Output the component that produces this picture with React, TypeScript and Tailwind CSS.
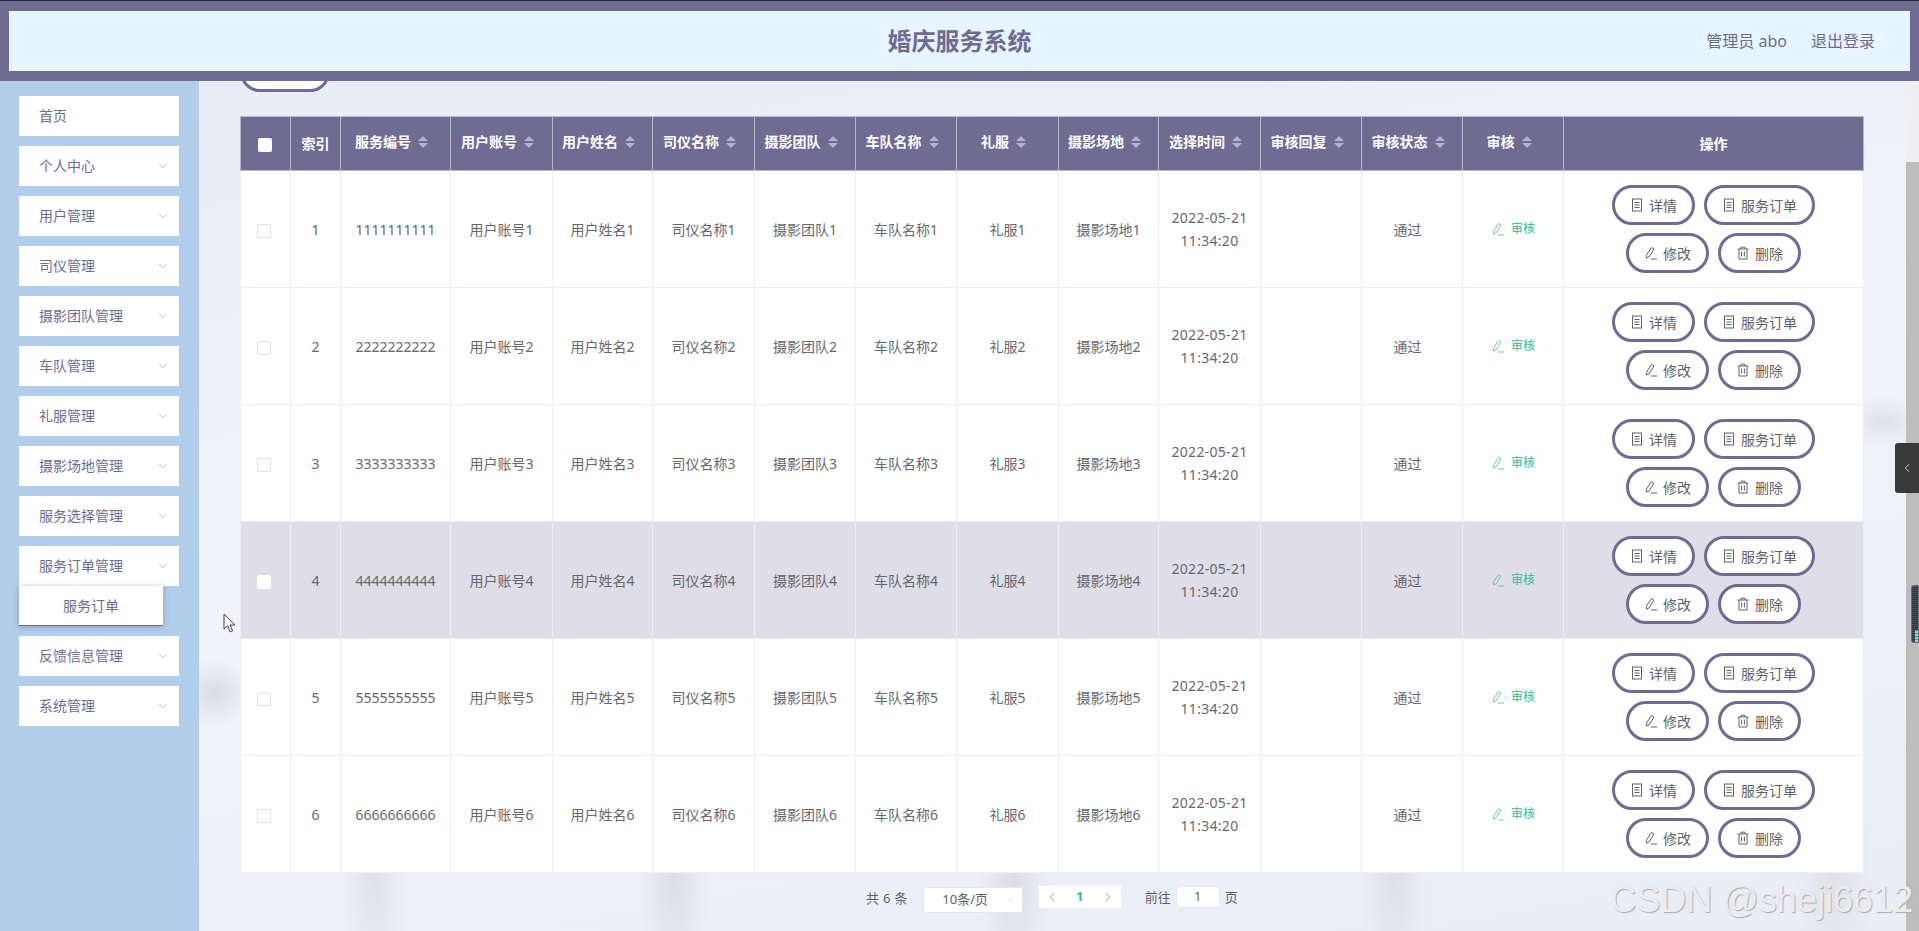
import { ChevronDown, ChevronLeft, ChevronRight } from "lucide-react"

const menus = ["首页", "个人中心", "用户管理", "司仪管理", "摄影团队管理", "车队管理", "礼服管理", "摄影场地管理", "服务选择管理", "服务订单管理", "反馈信息管理", "系统管理"]
const columns = ["服务编号", "用户账号", "用户姓名", "司仪名称", "摄影团队", "车队名称", "礼服", "摄影场地", "选择时间", "审核回复", "审核状态", "审核"]
const widths = [50, 50, 110, 102, 100, 102, 101, 101, 102, 100, 102, 101, 101, 101, 300]

function DocIcon() {
  return (
    <svg width="14" height="14" viewBox="0 0 14 14" fill="none" stroke="#606266" strokeWidth="1">
      <rect x="2.5" y="1" width="9" height="12" />
      <path d="M4.5 4.5h5M4.5 7h5M4.5 9.5h5" />
    </svg>
  )
}

function EditIcon({ color = "#606266" }: { color?: string }) {
  return (
    <svg width="14" height="14" viewBox="0 0 14 14" fill="none" stroke={color} strokeWidth="1">
      <path d="M7.5 1.5l2.5 1.5-5 8-2.5 1-.2-2.6z" />
      <path d="M7 13h6" />
    </svg>
  )
}

function TrashIcon() {
  return (
    <svg width="14" height="14" viewBox="0 0 14 14" fill="none" stroke="#606266" strokeWidth="1">
      <path d="M1.5 3h11M5 3V1.2h4V3M3 3v10h8V3M5.6 5.5v5M8.4 5.5v5" />
    </svg>
  )
}

function SortCaret() {
  return (
    <span className="ml-[7px] flex flex-col gap-[2px]">
      <span className="h-0 w-0 border-x-[5px] border-b-[5px] border-x-transparent border-b-[#b4b3c7]" />
      <span className="h-0 w-0 border-x-[5px] border-t-[5px] border-x-transparent border-t-[#b4b3c7]" />
    </span>
  )
}

function OpButton({ icon, label }: { icon: React.ReactNode; label: string }) {
  return (
    <button className="flex h-[40px] shrink-0 items-center gap-[5px] rounded-[20px] border-[3px] border-[#6f6b93] bg-white px-[15px] text-[14px] whitespace-nowrap text-[#606266]">
      {icon}
      {label}
    </button>
  )
}

function SideMenu() {
  return (
    <aside className="flex w-[199px] shrink-0 flex-col gap-[10px] bg-[#b3cdec] pt-[15px] pl-[19px]">
      {menus.map((name, i) => (
        <div key={name} className="w-[160px]">
          <div className="flex h-[40px] items-center justify-between bg-white pr-[9px] pb-[1px] pl-[20px] text-[14px] text-[#6f6b93]">
            {name}
            {i > 0 && <ChevronDown size={14} strokeWidth={1} className="text-[#8f8da8]" />}
          </div>
          {name === "服务订单管理" && (
            <div className="flex h-[40px] w-[144px] items-center justify-center border-b border-[#6f6b93] bg-white text-[14px] text-[#6f6b93] shadow-[0_1px_6px_rgba(60,60,90,0.35)]">
              服务订单
            </div>
          )}
        </div>
      ))}
    </aside>
  )
}

function OrderTable() {
  const rows = [1, 2, 3, 4, 5, 6]
  return (
    <table className="w-[1623px] table-fixed border-collapse text-center text-[14px] text-[#66686e]">
      <colgroup>
        {widths.map((w, i) => (
          <col key={i} className={w === 50 ? "w-[50px]" : w === 110 ? "w-[110px]" : w === 300 ? "w-[300px]" : w === 100 ? "w-[100px]" : w === 102 ? "w-[102px]" : "w-[101px]"} />
        ))}
      </colgroup>
      <thead>
        <tr className="h-[54px] bg-[#6f6b93] font-bold text-white">
          <th className="border border-[#b9b8cb]">
            <span className="-ml-[1px] inline-block h-[14px] w-[14px] rounded-[2px] bg-white align-middle" />
          </th>
          <th className="border border-[#b9b8cb] font-bold">索引</th>
          {columns.map((c) => (
            <th key={c} className="border border-[#b9b8cb] font-bold">
              <span className="flex -translate-y-[2px] items-center justify-center pr-[8px]">
                {c}
                <SortCaret />
              </span>
            </th>
          ))}
          <th className="border border-[#b9b8cb] font-bold">操作</th>
        </tr>
      </thead>
      <tbody>
        {rows.map((n) => {
          const d = String(n).repeat(10)
          return (
            <tr key={n} className={n === 4 ? "h-[117px] bg-[#dfdde8]" : "h-[117px] bg-white"}>
              <td className="border border-[#ebeef5]">
                <span className={`-ml-[4px] inline-block h-[14px] w-[14px] rounded-[2px] border border-[#dcdfe6] bg-white align-middle ${n === 4 ? "border-white" : ""}`} />
              </td>
              <td className="border border-[#ebeef5]">{n}</td>
              <td className="border border-[#ebeef5]">{d}</td>
              <td className="border border-[#ebeef5]">用户账号{n}</td>
              <td className="border border-[#ebeef5]">用户姓名{n}</td>
              <td className="border border-[#ebeef5]">司仪名称{n}</td>
              <td className="border border-[#ebeef5]">摄影团队{n}</td>
              <td className="border border-[#ebeef5]">车队名称{n}</td>
              <td className="border border-[#ebeef5]">礼服{n}</td>
              <td className="border border-[#ebeef5]">摄影场地{n}</td>
              <td className="border border-[#ebeef5] px-[10px] leading-[23px] tracking-[0.3px]">2022-05-21 11:34:20</td>
              <td className="border border-[#ebeef5]"></td>
              <td className="border border-[#ebeef5] pr-[9px]">通过</td>
              <td className="border border-[#ebeef5]">
                <span className="flex items-center justify-center gap-[6px] text-[12px] text-[#2dbd96]">
                  <EditIcon color="#6cc9ae" />
                  审核
                </span>
              </td>
              <td className="border border-[#ebeef5] px-[10px]">
                <div className="flex flex-wrap justify-center gap-x-[9px] gap-y-[8px]">
                  <OpButton icon={<DocIcon />} label="详情" />
                  <OpButton icon={<DocIcon />} label="服务订单" />
                  <OpButton icon={<EditIcon />} label="修改" />
                  <OpButton icon={<TrashIcon />} label="删除" />
                </div>
              </td>
            </tr>
          )
        })}
      </tbody>
    </table>
  )
}

function Pager() {
  return (
    <div className="mt-[13px] ml-[626px] flex items-start text-[13px] text-[#606266]">
      <span className="mt-[1px] leading-[22px] tracking-[0.3px]">共 6 条</span>
      <div className="relative mt-[1px] ml-[15px] flex h-[26px] w-[100px] items-center justify-center rounded-[3px] border border-[#e4e7ed] bg-white pr-[15px]">
        10条/页
        <ChevronDown size={12} strokeWidth={1} className="absolute right-[5px] text-[#c0c4cc]" />
      </div>
      <div className="ml-[16px] flex h-[22px] w-[82px] items-center justify-between bg-white px-[6px]">
        <ChevronLeft size={14} className="text-[#c0c4cc]" />
        <span className="font-bold text-[#2dbd96]">1</span>
        <ChevronRight size={14} className="text-[#c0c4cc]" />
      </div>
      <span className="ml-[24px] leading-[22px]">前往</span>
      <div className="ml-[5px] flex h-[22px] w-[44px] items-center justify-center rounded-[3px] border border-[#e4e7ed] bg-white">1</div>
      <span className="ml-[5px] leading-[22px]">页</span>
    </div>
  )
}

export default function App() {
  return (
    <div className="relative flex h-[931px] w-full flex-col overflow-hidden font-['Noto_Sans','Noto_Sans_CJK_SC',sans-serif]">
      <header className="z-10 h-[81px] shrink-0 border-t border-[#23233a] bg-[#6f6b93] px-[9px] pt-[10px]">
        <div className="relative flex h-[60px] items-center justify-center bg-[#e6f5ff]">
          <h1 className="text-[24px] font-bold text-[#6f6b93]">婚庆服务系统</h1>
          <div className="absolute right-[35px] flex gap-[24px] text-[16px] text-[#6f6b93]">
            <span>管理员 abo</span>
            <span>退出登录</span>
          </div>
        </div>
      </header>

      <div className="flex min-h-0 flex-1">
        <SideMenu />
        {/* blurred photo behind the table, faked with soft gradients */}
        <main className="min-w-0 flex-1 overflow-hidden bg-[#eaeef7] bg-[radial-gradient(ellipse_34px_110px_at_175px_800px,#dfe2e8,transparent),radial-gradient(ellipse_36px_110px_at_475px_800px,#dcdee4,transparent),radial-gradient(ellipse_36px_110px_at_815px_800px,#dcdee4,transparent),radial-gradient(ellipse_34px_110px_at_1195px_800px,#dee0e6,transparent),radial-gradient(ellipse_40px_110px_at_1635px_800px,#e0e2e8,transparent),radial-gradient(ellipse_40px_34px_at_15px_612px,#dcdde2,transparent),radial-gradient(ellipse_45px_26px_at_1685px_341px,#e0e2e6,transparent),linear-gradient(170deg,#e8ecf6,#f2f3fb_45%,#e8edf6)] pl-[41px]">
          <div className="-mt-[29px] mb-[24px] h-[40px] w-[90px] rounded-[20px] border-[3px] border-[#6f6b93] bg-white" />
          <OrderTable />
          <Pager />
        </main>
        <div className="flex w-[13px] shrink-0 flex-col bg-[#f0eef1]">
          <div className="mt-[81px] flex-1 bg-[#bdbdbd]" />
        </div>
      </div>

      {/* floating stuff over the page */}
      <div className="absolute top-[443px] right-0 flex h-[50px] w-[24px] items-center justify-center rounded-l-[3px] bg-[#3a3a3a]">
        <ChevronLeft size={14} strokeWidth={1.25} className="text-white" />
      </div>
      <div className="absolute top-[585px] right-0 flex h-[58px] w-[8px] flex-col justify-end rounded-l-[3px] border border-[#6a6f80] bg-[#3f4350] bg-[repeating-linear-gradient(0deg,#2f323c_0_1px,#4a4e5c_1px_2px)] pl-[3px]">
        <div className="h-[12px] bg-[repeating-linear-gradient(0deg,#7fe3bb_0_2px,#3f9d7c_2px_3px)]" />
      </div>
      <svg className="absolute top-[613px] left-[223px]" width="13" height="20" viewBox="0 0 13 20">
        <path d="M1 1v15l3.6-3.2 2.6 6 2.4-1-2.6-5.8h4.8z" fill="#fff" stroke="#3c3c46" strokeWidth="1" />
      </svg>
      <div className="absolute top-[879px] right-[6px] font-['Liberation_Sans',sans-serif] text-[36px] leading-[41px] text-[#ececef] [text-shadow:1px_1px_1px_#a9abb2]">
        CSDN @sheji6612
      </div>
    </div>
  )
}
